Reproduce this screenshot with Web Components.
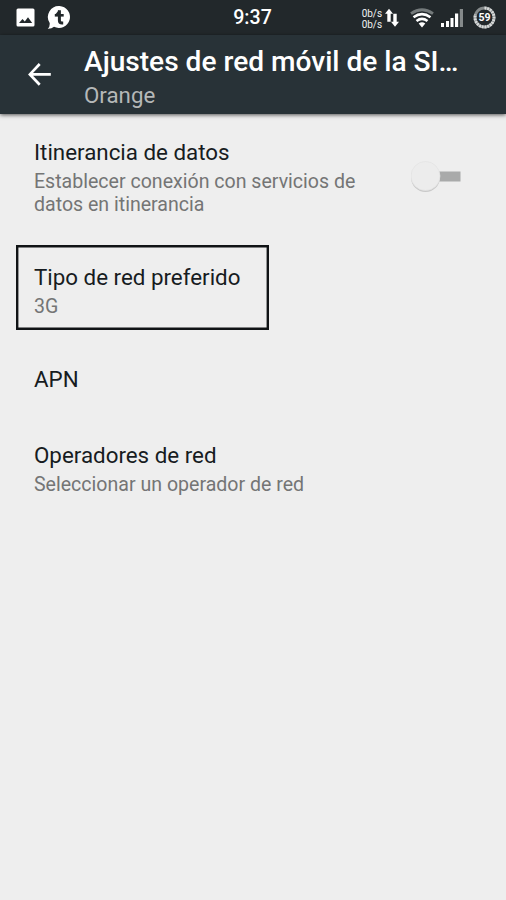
<!DOCTYPE html>
<html lang="es"><head><meta charset="utf-8"><title>Ajustes de red móvil</title>
<style>html,body{margin:0;height:100%;background:#eee}body{font-family:Roboto,"Noto Sans",sans-serif;overflow:hidden}</style></head>
<body>
<settings-screen></settings-screen>
<script>
const define=(name,html)=>customElements.define(name,class extends HTMLElement{
  constructor(){super();this.attachShadow({mode:'open'}).innerHTML=html;}
});

define('status-bar',`<style>
:host{display:grid;grid-template-columns:1fr auto 1fr;align-items:center;height:35px;background:#22282b;color:#fff;box-sizing:border-box;padding:0 10px 0 16px}
svg{display:block;flex:none}
.left,.right{display:flex;align-items:center}
.left{gap:13px}.right{justify-content:flex-end}
.time{font-size:19.6px;font-weight:500;line-height:35px;height:35px;margin-right:7px}
.rate{font-size:10px;line-height:11px;color:#f0f2f2;text-align:left;letter-spacing:-.05px;padding-top:2px}
</style>
<div class="left">
<svg width="19" height="19" viewBox="0 0 19 19"><path fill="#fff" fill-rule="evenodd" d="M2 .5h15a1.500 1.500 0 0 1 1.500 1.500v15a1.500 1.500 0 0 1-1.500 1.500H2A1.500 1.500 0 0 1 .5 17V2A1.500 1.500 0 0 1 2 .5zM3 15h13.200l-4.200-5.700-3.200 4.200-2.300-2.600z"/></svg>
<svg width="24" height="25" viewBox="0 0 24 25" style="margin-left:-1px"><path fill="#fff" d="M12.500 1A11 11 0 1 1 7 21.800Q4.500 24 .800 23.800Q3 22 2.700 18A11 11 0 0 1 12.500 1z"/><path fill="none" stroke="#22282b" stroke-width="3" d="M12.400 5.200v10.400q0 2.500 2.600 2.500h1.200"/><path fill="none" stroke="#22282b" stroke-width="2.600" d="M7.800 10.300h8.900"/><path fill="#22282b" d="M8 9.800l4-4.800v5z"/></svg>
</div>
<div class="time">9:37</div>
<div class="right">
<div class="rate">0b/s<br>0b/s</div>
<svg width="14" height="20" viewBox="0 0 14 20" style="margin-left:3px"><path fill="#fff" d="M4 .8l4 5H5.700v8H2.300v-8H0zM10 18.700l4-5h-2.300v-8H8.300v8H6z"/></svg>
<svg width="24" height="20" viewBox="0 0 24 20" style="margin-left:11px;margin-right:1px"><g fill="none" stroke="#fff" stroke-width="2.600"><path stroke="#747a7b" stroke-width="2.800" d="M1 5.600Q12-2.200 23 5.600"/><path d="M3.500 9.200Q12 3 20.500 9.200"/><path d="M6.500 13Q12 8.800 17.500 13"/></g><path fill="#fff" d="M8.700 15.600Q12 13 15.300 15.600L12 19.500z"/></svg>
<svg width="23" height="20" viewBox="0 0 23 20" style="margin-left:6px"><path fill="#fff" d="M0 15h3v4H0zM5 13h3v6H5zM9.500 10h3v9h-3zM14 5.500h3.200V19H14z"/><path fill="#858a8b" d="M18.800 1H22v18h-3.200z"/></svg>
<svg width="23" height="23" viewBox="0 0 23 23" style="margin-left:9px"><circle cx="11.500" cy="11.500" r="9.500" fill="none" stroke="#858a8b" stroke-width="2.800"/><path fill="none" stroke="#d8dada" stroke-width="3" stroke-dasharray="1.500 .6" pathLength="36" d="M11.500 2A9.500 9.500 0 1 1 2.500 8.500"/><text x="11.500" y="15.300" text-anchor="middle" font-family="Roboto,sans-serif" font-weight="700" font-size="10.500" fill="#fff">59</text></svg>
</div>`);

define('app-bar',`<style>
:host{display:flex;height:79px;box-sizing:border-box;background:#283237;color:#fff;padding-left:27px;box-shadow:0 1px 4px rgba(0,0,0,.65);position:relative}
svg{flex:none;margin-top:27px}
.text{margin-left:32px;padding-top:10px}
.title{font-size:28.1px;font-weight:500;line-height:34px;white-space:nowrap}
.sub{font-size:22.3px;line-height:30px;color:#b5b8b8;margin-top:1px}
</style>
<svg width="25" height="25" viewBox="0 0 25 25"><path fill="none" stroke="#fff" stroke-width="2.700" d="M12.700 2L2.900 12.400l9.800 10.400M3 12.400h20.800"/></svg>
<div class="text"><div class="title"><slot name="title"></slot></div><div class="sub"><slot name="subtitle"></slot></div></div>`);

define('preference-row',`<style>
:host{display:flex;box-sizing:border-box;height:var(--row,102px);padding:21.500px 45px 0 34px}
.text{flex:1;min-width:0}
.title{font-size:22.350px;line-height:30px;color:#171c1f;white-space:nowrap}
.sum{font-size:19.570px;line-height:23px;color:#747575;margin-top:3px;white-space:nowrap}
</style>
<div class="text"><div class="title"><slot name="title"></slot></div><div class="sum"><slot></slot></div></div><slot name="widget"></slot>`);

define('focus-frame',`<style>
:host{display:grid;height:102px}
::slotted(*),.frame{grid-area:1/1}
.frame{width:253px;height:85px;box-sizing:border-box;border:2px solid #101315;box-shadow:inset 0 0 0 .4px #101315;margin:4px 0 0 16px}
</style><slot></slot><div class="frame"></div>`);

define('toggle-switch',`<style>
:host{display:block;width:50px;height:32px;margin-top:23px}svg{display:block}
</style><svg width="50" height="34" viewBox="0 0 50 34"><path fill="#a9aaaa" d="M20 11.500h29.500v10H20z"/><circle cx="14.500" cy="17.500" r="14.500" fill="#c9c9c9"/><circle cx="14.500" cy="16" r="14.500" fill="#ececec" stroke="#e2e2e2" stroke-width=".7"/></svg>`);

define('settings-screen',`<style>
:host{display:flex;flex-direction:column;height:900px;background:#eee}
main{display:flex;flex-direction:column;padding-top:1px}
.roaming{--row:125.500px}.apn{--row:75.500px}
</style>
<status-bar></status-bar>
<app-bar><span slot="title">Ajustes de red móvil de la SI…</span><span slot="subtitle">Orange</span></app-bar>
<main>
<preference-row class="roaming"><span slot="title">Itinerancia de datos</span>Establecer conexión con servicios de<br>datos en itinerancia<toggle-switch slot="widget"></toggle-switch></preference-row>
<focus-frame><preference-row><span slot="title">Tipo de red preferido</span>3G</preference-row></focus-frame>
<preference-row class="apn"><span slot="title">APN</span></preference-row>
<preference-row><span slot="title">Operadores de red</span>Seleccionar un operador de red</preference-row>
</main>`);
</script>
</body></html>
